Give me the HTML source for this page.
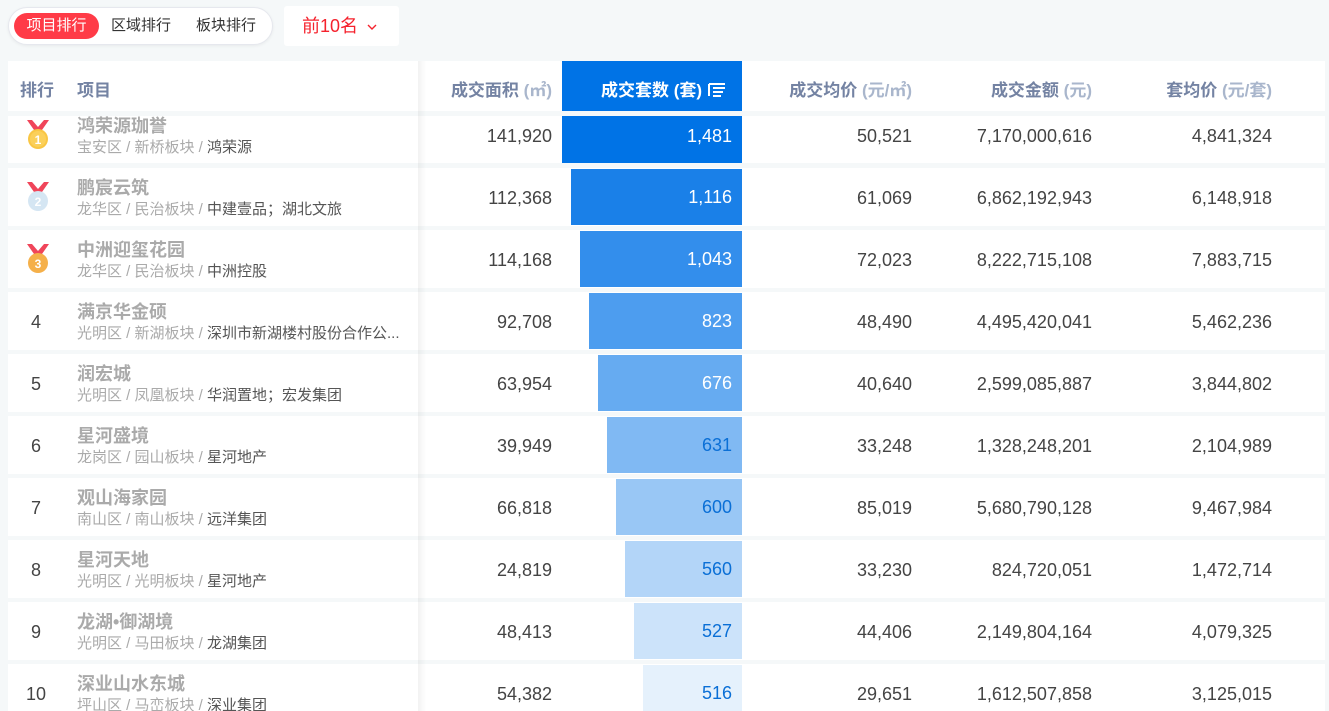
<!DOCTYPE html><html><head><meta charset="utf-8"><style>
*{margin:0;padding:0;box-sizing:border-box}
html,body{width:1329px;height:711px;overflow:hidden}
body{background:#f5f8f9;font-family:"Liberation Sans","Noto Sans CJK SC",sans-serif;position:relative}
.tabs{position:absolute;left:8px;top:7px;width:265px;height:38px;border-radius:19px;background:#fff;border:1px solid #e6e8ee;box-shadow:0 1px 3px rgba(0,0,0,.06)}
.tabs span{position:absolute;top:5px;height:26px;line-height:26px;font-size:15px;color:#333}
.tabs .on{left:5px;width:85px;background:#ff3b47;color:#fff;border-radius:13px;text-align:center}
.sel{position:absolute;left:284px;top:6px;width:115px;height:40px;background:#fff;border-radius:3px;color:#f5222d;font-size:18px;line-height:40px;padding-left:18px}
.hdr{position:absolute;left:8px;top:61px;width:1317px;height:50px;background:#fff}
.h{position:absolute;top:76px;font-size:17px;font-weight:bold;color:#7483a3;white-space:nowrap}
.h i{font-style:normal;color:#a9b6cc;font-weight:bold}
.row{position:absolute;left:8px;width:1317px;background:#fff;overflow:hidden}
.c{position:absolute;font-size:18px;color:#444;white-space:nowrap}
.nm{position:absolute;left:77px;font-size:18px;font-weight:bold;color:#aaa}
.sub{position:absolute;left:77px;font-size:15px;color:#aaa;white-space:nowrap}
.sub b{font-weight:normal;color:#555}
.bar{position:absolute}
.bar span{position:absolute;right:10px;font-size:18px}
.shadow{position:absolute;left:418px;top:61px;width:8px;height:650px;background:linear-gradient(90deg,rgba(0,0,0,.05),rgba(0,0,0,0))}
</style></head><body>
<div class="tabs"><span class="on">项目排行</span><span style="left:102px">区域排行</span><span style="left:187px">板块排行</span></div>
<div class="sel">前10名 <svg width="10" height="8" viewBox="0 0 10 8" style="vertical-align:1px;margin-left:4px"><path d="M1 2l4 4 4-4" stroke="#f5222d" stroke-width="1.4" fill="none"/></svg></div>
<div class="hdr"></div>
<div style="position:absolute;left:562px;top:61px;width:180px;height:50px;background:#0073e6"></div>
<div class="h" style="left:20px">排行</div>
<div class="h" style="left:77px">项目</div>
<div class="h" style="right:777px">成交面积 <i>(㎡)</i></div>
<div class="h" style="left:601px;color:#fff">成交套数 (套) <svg width="20" height="16" viewBox="0 0 20 16" style="vertical-align:-2px"><path d="M2 2h16M2 2v12M6 6h12M6 10h10M6 14h8" stroke="#fff" stroke-width="2" fill="none"/></svg></div>
<div class="h" style="right:417px">成交均价 <i>(元/㎡)</i></div>
<div class="h" style="right:237px">成交金额 <i>(元)</i></div>
<div class="h" style="right:57px">套均价 <i>(元/套)</i></div>

<div class="row" style="top:116px;height:47px"></div>
<div class="row" style="top:168px;height:58px"></div>
<div class="row" style="top:230px;height:58px"></div>
<div class="row" style="top:292px;height:58px"></div>
<div class="row" style="top:354px;height:58px"></div>
<div class="row" style="top:416px;height:58px"></div>
<div class="row" style="top:478px;height:58px"></div>
<div class="row" style="top:540px;height:58px"></div>
<div class="row" style="top:602px;height:58px"></div>
<div class="row" style="top:664px;height:58px"></div>

<div class="bar" style="top:116px;height:47px;width:180px;left:562px;background:#0073e6"><span style="top:10px;color:#fff">1,481</span></div>
<div class="bar" style="top:169px;height:56px;width:171px;left:571px;background:#1a80e8"><span style="top:18px;color:#fff">1,116</span></div>
<div class="bar" style="top:231px;height:56px;width:162px;left:580px;background:#338eec"><span style="top:18px;color:#fff">1,043</span></div>
<div class="bar" style="top:293px;height:56px;width:153px;left:589px;background:#4d9def"><span style="top:18px;color:#fff">823</span></div>
<div class="bar" style="top:355px;height:56px;width:144px;left:598px;background:#66abf1"><span style="top:18px;color:#fff">676</span></div>
<div class="bar" style="top:417px;height:56px;width:135px;left:607px;background:#80b9f3"><span style="top:18px;color:#0a6fd6">631</span></div>
<div class="bar" style="top:479px;height:56px;width:126px;left:616px;background:#99c7f5"><span style="top:18px;color:#0a6fd6">600</span></div>
<div class="bar" style="top:541px;height:56px;width:117px;left:625px;background:#b3d5f8"><span style="top:18px;color:#0a6fd6">560</span></div>
<div class="bar" style="top:603px;height:56px;width:108px;left:634px;background:#cce3fa"><span style="top:18px;color:#0a6fd6">527</span></div>
<div class="bar" style="top:665px;height:56px;width:99px;left:643px;background:#e5f1fc"><span style="top:18px;color:#0a6fd6">516</span></div>

<svg style="position:absolute;left:25px;top:119px" width="26" height="32" viewBox="0 0 26 32"><path d="M2 1l7 10h8l7-10h-5l-6 7-6-7z" fill="#f0455a"/><circle cx="13" cy="20" r="10" fill="#f9c644"/><circle cx="13" cy="20" r="8" fill="#fbd05a"/><text x="13" y="25" font-size="12" font-weight="bold" fill="#fff" text-anchor="middle" font-family="Liberation Sans">1</text></svg>
<svg style="position:absolute;left:25px;top:181px" width="26" height="32" viewBox="0 0 26 32"><path d="M2 1l7 10h8l7-10h-5l-6 7-6-7z" fill="#f0455a"/><circle cx="13" cy="20" r="10" fill="#d5e6f3"/><text x="13" y="25" font-size="12" font-weight="bold" fill="#fff" text-anchor="middle" font-family="Liberation Sans">2</text></svg>
<svg style="position:absolute;left:25px;top:243px" width="26" height="32" viewBox="0 0 26 32"><path d="M2 1l7 10h8l7-10h-5l-6 7-6-7z" fill="#f0455a"/><circle cx="13" cy="20" r="10" fill="#f5b04a"/><text x="13" y="25" font-size="12" font-weight="bold" fill="#fff" text-anchor="middle" font-family="Liberation Sans">3</text></svg>
<div class="c" style="left:31px;top:312px">4</div>
<div class="c" style="left:31px;top:374px">5</div>
<div class="c" style="left:31px;top:436px">6</div>
<div class="c" style="left:31px;top:498px">7</div>
<div class="c" style="left:31px;top:560px">8</div>
<div class="c" style="left:31px;top:622px">9</div>
<div class="c" style="left:26px;top:684px">10</div>

<div class="nm" style="top:112px">鸿荣源珈誉</div><div class="sub" style="top:136px">宝安区 / 新桥板块 / <b>鸿荣源</b></div>
<div class="nm" style="top:174px">鹏宸云筑</div><div class="sub" style="top:198px">龙华区 / 民治板块 / <b>中建壹品；湖北文旅</b></div>
<div class="nm" style="top:236px">中洲迎玺花园</div><div class="sub" style="top:260px">龙华区 / 民治板块 / <b>中洲控股</b></div>
<div class="nm" style="top:298px">满京华金硕</div><div class="sub" style="top:322px">光明区 / 新湖板块 / <b>深圳市新湖楼村股份合作公...</b></div>
<div class="nm" style="top:360px">润宏城</div><div class="sub" style="top:384px">光明区 / 凤凰板块 / <b>华润置地；宏发集团</b></div>
<div class="nm" style="top:422px">星河盛境</div><div class="sub" style="top:446px">龙岗区 / 园山板块 / <b>星河地产</b></div>
<div class="nm" style="top:484px">观山海家园</div><div class="sub" style="top:508px">南山区 / 南山板块 / <b>远洋集团</b></div>
<div class="nm" style="top:546px">星河天地</div><div class="sub" style="top:570px">光明区 / 光明板块 / <b>星河地产</b></div>
<div class="nm" style="top:608px">龙湖•御湖境</div><div class="sub" style="top:632px">光明区 / 马田板块 / <b>龙湖集团</b></div>
<div class="nm" style="top:670px">深业山水东城</div><div class="sub" style="top:694px">坪山区 / 马峦板块 / <b>深业集团</b></div>

<div class="c" style="right:777px;top:126px">141,920</div><div class="c" style="right:417px;top:126px">50,521</div><div class="c" style="right:237px;top:126px">7,170,000,616</div><div class="c" style="right:57px;top:126px">4,841,324</div>
<div class="c" style="right:777px;top:188px">112,368</div><div class="c" style="right:417px;top:188px">61,069</div><div class="c" style="right:237px;top:188px">6,862,192,943</div><div class="c" style="right:57px;top:188px">6,148,918</div>
<div class="c" style="right:777px;top:250px">114,168</div><div class="c" style="right:417px;top:250px">72,023</div><div class="c" style="right:237px;top:250px">8,222,715,108</div><div class="c" style="right:57px;top:250px">7,883,715</div>
<div class="c" style="right:777px;top:312px">92,708</div><div class="c" style="right:417px;top:312px">48,490</div><div class="c" style="right:237px;top:312px">4,495,420,041</div><div class="c" style="right:57px;top:312px">5,462,236</div>
<div class="c" style="right:777px;top:374px">63,954</div><div class="c" style="right:417px;top:374px">40,640</div><div class="c" style="right:237px;top:374px">2,599,085,887</div><div class="c" style="right:57px;top:374px">3,844,802</div>
<div class="c" style="right:777px;top:436px">39,949</div><div class="c" style="right:417px;top:436px">33,248</div><div class="c" style="right:237px;top:436px">1,328,248,201</div><div class="c" style="right:57px;top:436px">2,104,989</div>
<div class="c" style="right:777px;top:498px">66,818</div><div class="c" style="right:417px;top:498px">85,019</div><div class="c" style="right:237px;top:498px">5,680,790,128</div><div class="c" style="right:57px;top:498px">9,467,984</div>
<div class="c" style="right:777px;top:560px">24,819</div><div class="c" style="right:417px;top:560px">33,230</div><div class="c" style="right:237px;top:560px">824,720,051</div><div class="c" style="right:57px;top:560px">1,472,714</div>
<div class="c" style="right:777px;top:622px">48,413</div><div class="c" style="right:417px;top:622px">44,406</div><div class="c" style="right:237px;top:622px">2,149,804,164</div><div class="c" style="right:57px;top:622px">4,079,325</div>
<div class="c" style="right:777px;top:684px">54,382</div><div class="c" style="right:417px;top:684px">29,651</div><div class="c" style="right:237px;top:684px">1,612,507,858</div><div class="c" style="right:57px;top:684px">3,125,015</div>
<div class="shadow"></div>
</body></html>
